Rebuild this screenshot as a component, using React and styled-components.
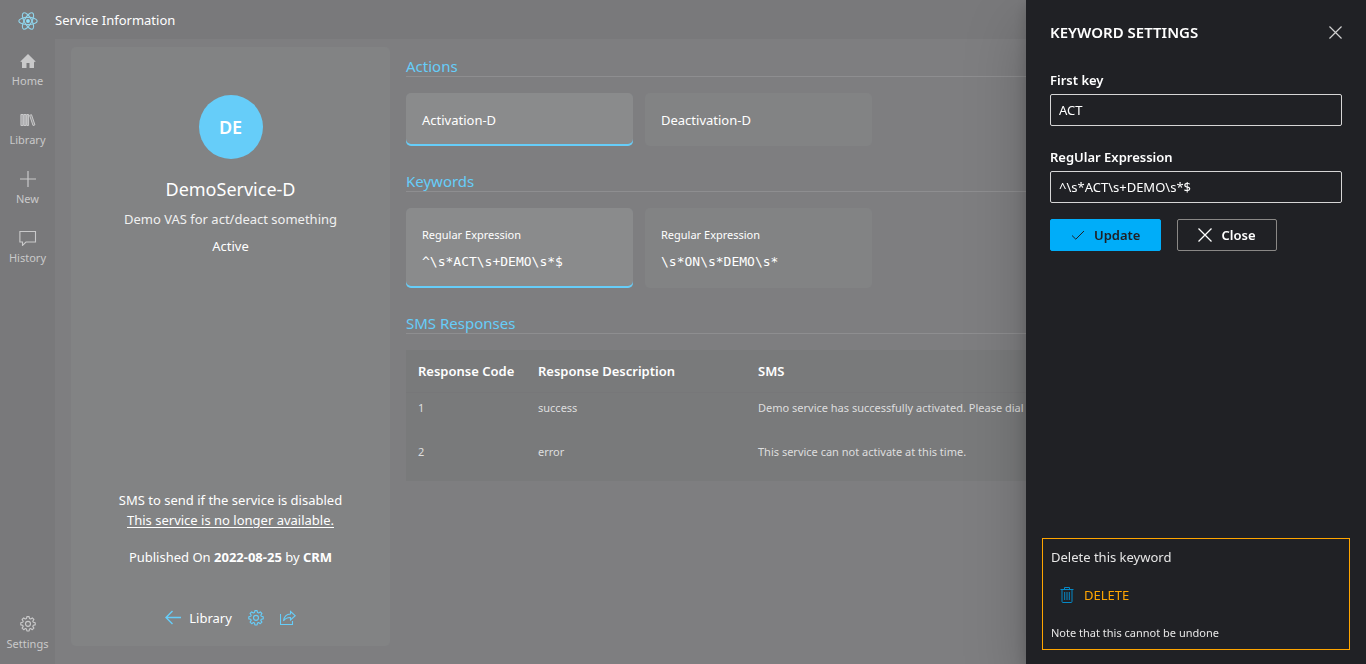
import React, { useState } from "react";
import styled, { createGlobalStyle, ThemeProvider } from "styled-components";

const theme = {
  accent: "#66cdf9",
  nav: "#79797b",
  page: "#7e7e80",
  card: "#828384",
  cardActive: "#8a8b8c",
  table: "#797a7b",
  line: "#8e8e90",
  drawer: "#202125",
  primary: "#00adf9",
  warning: "#ffa500",
  mono: '"DejaVu Sans Mono", monospace',
};

const GlobalStyle = createGlobalStyle`
  *, *::before, *::after { box-sizing: border-box; }
  body {
    margin: 0;
    background: #7e7e80;
    color: #fff;
    font: 400 13px/20px "Noto Sans", "Open Sans", sans-serif;
    overflow-x: hidden;
  }
  h1, h2, h3, p { margin: 0; font-weight: 400; }
  button, input { font: inherit; color: inherit; }
  button { cursor: pointer; }
  a { color: inherit; text-decoration: none; }
  svg { display: block; flex: none; }
`;

/* ---------- icons ---------- */

const ReactLogo = () => (
  <svg width="20" height="18" viewBox="-11.5 -10.2 23 20.4" fill="none" stroke="#8fd3ea" strokeWidth="1.3" aria-hidden="true">
    <circle r="2.2" fill="#8fe0fa" stroke="none" />
    <ellipse rx="10.6" ry="4.2" />
    <ellipse rx="10.6" ry="4.2" transform="rotate(60)" />
    <ellipse rx="10.6" ry="4.2" transform="rotate(120)" />
  </svg>
);

const HomeIcon = () => (
  <svg width="16" height="16" viewBox="0 0 16 16" fill="currentColor" aria-hidden="true">
    <path d="M8 1 0.4 8.400 1.200 9.200 2 8.500V15h4.500v-5h3v5H14V8.500l.8.7.8-.8Z" />
  </svg>
);

const LibraryIcon = () => (
  <svg width="16" height="16" viewBox="0 0 16 16" stroke="currentColor" aria-hidden="true">
    <path d="M.9 2.500h2.300v11H.9ZM3.900 2.500h2.200v11H3.900ZM6.800 2.500h1.800v11H6.800Z" fill="currentColor" fillOpacity=".55" />
    <path d="m9.600 3.300 1.900-.6 3.400 10.200-1.900.6Z" fill="currentColor" fillOpacity=".3" />
  </svg>
);

const PlusIcon = () => (
  <svg width="16" height="16" viewBox="0 0 16 16" fill="none" stroke="currentColor" strokeWidth="1.200" aria-hidden="true">
    <path d="M8 0v16M0 8h16" />
  </svg>
);

const CommentIcon = () => (
  <svg width="18" height="16" viewBox="0 0 18 16" fill="none" stroke="currentColor" strokeWidth="1.100" aria-hidden="true">
    <path d="M.9 1.500h15.600v10.500H7L3.500 15.400V12H.9Z" />
  </svg>
);

const GearIcon = () => (
  <svg width="16" height="16" viewBox="0 0 16 16" fill="none" stroke="currentColor" strokeWidth="1.150" strokeLinejoin="round" aria-hidden="true">
    <path d="M6.900.6h2.200l.4 1.900 1.100.5 1.700-1.100 1.600 1.600-1.100 1.700.5 1.100 1.900.4v2.200l-1.900.4-.5 1.100 1.100 1.700-1.600 1.600-1.700-1.100-1.100.5-.4 1.900H6.900l-.4-1.900-1.100-.5-1.700 1.100-1.600-1.600 1.100-1.700-.5-1.100L.8 8.900V6.700l1.900-.4.5-1.100-1.100-1.700 1.600-1.600L5.400 3l1.100-.5Z" />
    <circle cx="8" cy="7.800" r="2.500" />
  </svg>
);

const BackIcon = () => (
  <svg width="16" height="16" viewBox="0 0 16 16" fill="none" stroke="currentColor" strokeWidth="1.400" aria-hidden="true">
    <path d="M16 7.500H1M7.500 1 1 7.500 7.500 14" />
  </svg>
);

const ShareIcon = () => (
  <svg width="16" height="16" viewBox="0 0 16 16" fill="none" stroke="currentColor" strokeWidth="1.100" aria-hidden="true">
    <path d="M.5 4v10.500h12V11" />
    <path d="M10.500 1.500 15.200 5.700 10.500 10V7.500C7.500 7.400 5.200 8.400 3.500 10.900 4 6.900 6.500 4.200 10.500 4Z" />
  </svg>
);

const CrossIcon = ({ size = 14 }) => (
  <svg width={size} height={size} viewBox="0 0 14 14" fill="none" stroke="currentColor" strokeWidth="1.300" aria-hidden="true">
    <path d="M.5.5l13 13M13.500.5l-13 13" />
  </svg>
);

const CheckIcon = () => (
  <svg width="14" height="14" viewBox="0 0 14 14" fill="none" stroke="currentColor" aria-hidden="true">
    <path d="M1 7.500 4.800 11.200 13 3" />
  </svg>
);

const TrashIcon = () => (
  <svg width="14" height="16" viewBox="0 0 14 16" fill="none" stroke="currentColor" aria-hidden="true">
    <path d="M.5 2.500h13M4.500 2.500v-2h5v2M2 2.500v12q0 1 1 1h8q1 0 1-1v-12M4.700 5v8M7 5v8M9.300 5v8" />
  </svg>
);

/* ---------- shell ---------- */

const Shell = styled.div`
  display: grid;
  grid-template: 39px 1fr / 55px minmax(0, 1fr);
  min-height: 100vh;
  background: ${({ theme }) => theme.nav};
`;

const Brand = styled.a`
  display: flex;
  align-items: center;
  justify-content: center;
  padding-top: 2px;
`;

const TopBar = styled.header`
  display: flex;
  align-items: center;
`;

const TopTitle = styled.h1`
  font-size: 13px;
  line-height: 20px;
`;

const SideNav = styled.nav`
  display: flex;
  flex-direction: column;
  padding: 14px 0 10px;
  gap: 21px;
`;

const NavItem = styled.a`
  display: flex;
  flex-direction: column;
  align-items: center;
  gap: 2px;
  color: #c9c9ca;
  font-size: 11px;
  line-height: 20px;
  margin-top: ${({ $last }) => ($last ? "auto" : "0")};
`;

const Page = styled.main`
  display: grid;
  grid-template-columns: 319px minmax(0, 1fr);
  gap: 16px;
  padding: 8px 16px 18px;
  background: ${({ theme }) => theme.page};
`;

/* ---------- service profile ---------- */

const Profile = styled.section`
  display: flex;
  flex-direction: column;
  align-items: center;
  padding: 48px 16px 18px;
  border-radius: 5px;
  background: ${({ theme }) => theme.card};
  text-align: center;
`;

const Avatar = styled.div`
  display: grid;
  place-items: center;
  width: 64px;
  height: 64px;
  margin-bottom: 16px;
  border-radius: 50%;
  background: ${({ theme }) => theme.accent};
  font-size: 18px;
  font-weight: 600;
`;

const ServiceName = styled.h2`
  font-size: 18px;
  line-height: 28px;
`;

const ProfileText = styled.p`
  margin-top: ${({ $gap = 0 }) => $gap}px;
  color: ${({ $soft }) => ($soft ? "#f0f0f0" : "#fff")};
`;

const Spacer = styled.div`
  flex: 1;
`;

const Underlined = styled.span`
  text-decoration: underline;
  text-underline-offset: 2px;
`;

const ProfileActions = styled.div`
  display: flex;
  align-items: center;
  gap: 16px;
  margin-top: 41px;
`;

const BackLink = styled.a`
  display: flex;
  align-items: center;
  gap: 8px;

  svg {
    color: ${({ theme }) => theme.accent};
  }
`;

const IconButton = styled.button`
  display: grid;
  place-items: center;
  padding: 0;
  border: 0;
  background: none;
  color: ${({ $tone, theme }) => $tone || theme.accent};
`;

/* ---------- details ---------- */

const Details = styled.div`
  display: flex;
  flex-direction: column;
  gap: 25px;
  padding-top: 9px;
`;

const SectionTitle = styled.h3`
  margin-bottom: 16px;
  border-bottom: 1px solid ${({ theme }) => theme.line};
  color: ${({ theme }) => theme.accent};
  font-size: 15px;
  line-height: 20px;
`;

const Tiles = styled.div`
  display: grid;
  grid-template-columns: repeat(4, 1fr);
  gap: 12px;
`;

const Tile = styled.button`
  display: flex;
  flex-direction: column;
  justify-content: center;
  align-items: flex-start;
  gap: 7px;
  min-height: ${({ $tall }) => ($tall ? 80 : 53)}px;
  padding: 0 16px;
  border: 0;
  border-radius: 5px;
  background: ${({ $active, theme }) => ($active ? theme.cardActive : theme.card)};
  box-shadow: ${({ $active, theme }) => ($active ? `inset 0 -2px ${theme.accent}` : "none")};
  text-align: left;
`;

const TileLabel = styled.span`
  font-size: 11px;
`;

const Code = styled.code`
  font-family: ${({ theme }) => theme.mono};
  font-size: 13px;
`;

const ResponseTable = styled.table`
  width: 100%;
  table-layout: fixed;
  border-spacing: 0;
  background: ${({ theme }) => theme.table};
  text-align: left;

  th,
  td {
    padding: 0 12px;
    white-space: nowrap;
  }
  th {
    height: 43px;
    border-bottom: 1px solid #777779;
    font-weight: 600;
  }
  td {
    height: 44px;
    padding-top: 5px;
    color: #dededf;
    font-size: 11px;
    vertical-align: top;
  }
`;

const Column = styled.col`
  width: ${({ $width }) => $width};
`;

/* ---------- drawer ---------- */

const Drawer = styled.aside`
  position: fixed;
  top: 0;
  right: 0;
  bottom: 0;
  display: flex;
  flex-direction: column;
  width: 340px;
  max-width: 100%;
  padding: 20px 16px 14px;
  overflow-y: auto;
  background: ${({ theme }) => theme.drawer};
  box-shadow: 0 26px 58px rgba(0, 0, 0, 0.22), 0 5px 14px rgba(0, 0, 0, 0.18);
`;

const DrawerHeader = styled.header`
  display: flex;
  align-items: center;
  justify-content: space-between;
  height: 24px;
  padding: 0 8px;
`;

const DrawerTitle = styled.h2`
  font-size: 15px;
  font-weight: 600;
  line-height: 24px;
`;

const Form = styled.form`
  display: flex;
  flex-direction: column;
  gap: 21px;
  margin: 26px 8px 0;
`;

const Field = styled.div`
  display: flex;
  flex-direction: column;
  gap: 4px;

  label {
    font-weight: 600;
  }
  input {
    width: 100%;
    height: 32px;
    padding: 0 8px;
    border: 1px solid #d6d6d6;
    border-radius: 2px;
    background: transparent;
    outline: none;
  }
`;

const FormActions = styled.div`
  display: flex;
  gap: 16px;
  margin-top: -5px;
`;

const Button = styled.button`
  display: flex;
  align-items: center;
  gap: 9px;
  height: 32px;
  padding: 0 20px;
  border: 1px solid ${({ $primary, theme }) => ($primary ? theme.primary : "#8a8886")};
  border-radius: 2px;
  background: ${({ $primary, theme }) => ($primary ? theme.primary : "transparent")};
  color: ${({ $primary }) => ($primary ? "#202125" : "#fff")};
  font-weight: 600;
`;

const DangerZone = styled.section`
  display: flex;
  flex-direction: column;
  align-items: flex-start;
  gap: 12px;
  margin-top: auto;
  padding: 8px 8px 6px;
  border: 1px solid ${({ theme }) => theme.warning};
  color: #e6e6e6;
`;

const DeleteButton = styled.button`
  display: flex;
  align-items: center;
  gap: 10px;
  height: 32px;
  padding: 0 9px;
  border: 0;
  background: none;
  color: ${({ theme }) => theme.warning};

  svg {
    color: #0588c6;
  }
`;

const Note = styled.small`
  font-size: 11px;
  line-height: 20px;
`;

const navItems = [
  { label: "Home", Icon: HomeIcon },
  { label: "Library", Icon: LibraryIcon },
  { label: "New", Icon: PlusIcon },
  { label: "History", Icon: CommentIcon },
];

const actions = ["Activation-D", "Deactivation-D"];
const keywords = ["^\\s*ACT\\s+DEMO\\s*$", "\\s*ON\\s*DEMO\\s*"];

const responses = [
  { code: 1, description: "success", sms: "Demo service has successfully activated. Please dial" },
  { code: 2, description: "error", sms: "This service can not activate at this time." },
];

function KeywordDrawer({ onClose }) {
  return (
    <Drawer aria-label="Keyword settings">
      <DrawerHeader>
        <DrawerTitle>KEYWORD SETTINGS</DrawerTitle>
        <IconButton type="button" $tone="#d0d0d0" aria-label="Close panel" onClick={onClose}>
          <CrossIcon size={13} />
        </IconButton>
      </DrawerHeader>
      <Form onSubmit={(event) => event.preventDefault()}>
        <Field>
          <label htmlFor="first-key">First key</label>
          <input id="first-key" defaultValue="ACT" />
        </Field>
        <Field>
          <label htmlFor="expression">RegUlar Expression</label>
          <input id="expression" defaultValue={keywords[0]} />
        </Field>
        <FormActions>
          <Button $primary type="submit">
            <CheckIcon />
            Update
          </Button>
          <Button type="button" onClick={onClose}>
            <CrossIcon />
            Close
          </Button>
        </FormActions>
      </Form>
      <DangerZone>
        <p>Delete this keyword</p>
        <DeleteButton type="button">
          <TrashIcon />
          DELETE
        </DeleteButton>
        <Note>Note that this cannot be undone</Note>
      </DangerZone>
    </Drawer>
  );
}

export default function App() {
  const [open, setOpen] = useState(true);
  const [action, setAction] = useState(0);
  const [keyword, setKeyword] = useState(0);

  return (
    <ThemeProvider theme={theme}>
      <GlobalStyle />
      <Shell>
        <Brand href="#" aria-label="Start page">
          <ReactLogo />
        </Brand>
        <TopBar>
          <TopTitle>Service Information</TopTitle>
        </TopBar>
        <SideNav>
          {navItems.map(({ label, Icon }) => (
            <NavItem key={label} href="#">
              <Icon />
              {label}
            </NavItem>
          ))}
          <NavItem href="#" $last>
            <GearIcon />
            Settings
          </NavItem>
        </SideNav>
        <Page>
          <Profile>
            <Avatar>DE</Avatar>
            <ServiceName>DemoService-D</ServiceName>
            <ProfileText $gap={6} $soft>Demo VAS for act/deact something</ProfileText>
            <ProfileText $gap={7}>Active</ProfileText>
            <Spacer />
            <ProfileText>SMS to send if the service is disabled</ProfileText>
            <ProfileText>
              <Underlined>This service is no longer available.</Underlined>
            </ProfileText>
            <ProfileText $gap={17}>
              Published On <b>2022-08-25</b> by <b>CRM</b>
            </ProfileText>
            <ProfileActions>
              <BackLink href="#">
                <BackIcon />
                Library
              </BackLink>
              <IconButton type="button" aria-label="Service settings">
                <GearIcon />
              </IconButton>
              <IconButton type="button" aria-label="Share">
                <ShareIcon />
              </IconButton>
            </ProfileActions>
          </Profile>
          <Details>
            <section>
              <SectionTitle>Actions</SectionTitle>
              <Tiles>
                {actions.map((name, index) => (
                  <Tile key={name} type="button" $active={index === action} onClick={() => setAction(index)}>
                    {name}
                  </Tile>
                ))}
              </Tiles>
            </section>
            <section>
              <SectionTitle>Keywords</SectionTitle>
              <Tiles>
                {keywords.map((expression, index) => (
                  <Tile
                    key={expression}
                    type="button"
                    $tall
                    $active={index === keyword}
                    onClick={() => {
                      setKeyword(index);
                      setOpen(true);
                    }}
                  >
                    <TileLabel>Regular Expression</TileLabel>
                    <Code>{expression}</Code>
                  </Tile>
                ))}
              </Tiles>
            </section>
            <section>
              <SectionTitle>SMS Responses</SectionTitle>
              <ResponseTable>
                <colgroup>
                  <Column $width="120px" />
                  <Column $width="220px" />
                  <Column $width="auto" />
                </colgroup>
                <thead>
                  <tr>
                    <th scope="col">Response Code</th>
                    <th scope="col">Response Description</th>
                    <th scope="col">SMS</th>
                  </tr>
                </thead>
                <tbody>
                  {responses.map(({ code, description, sms }) => (
                    <tr key={code}>
                      <td>{code}</td>
                      <td>{description}</td>
                      <td>{sms}</td>
                    </tr>
                  ))}
                </tbody>
              </ResponseTable>
            </section>
          </Details>
        </Page>
      </Shell>
      {open && <KeywordDrawer onClose={() => setOpen(false)} />}
    </ThemeProvider>
  );
}
